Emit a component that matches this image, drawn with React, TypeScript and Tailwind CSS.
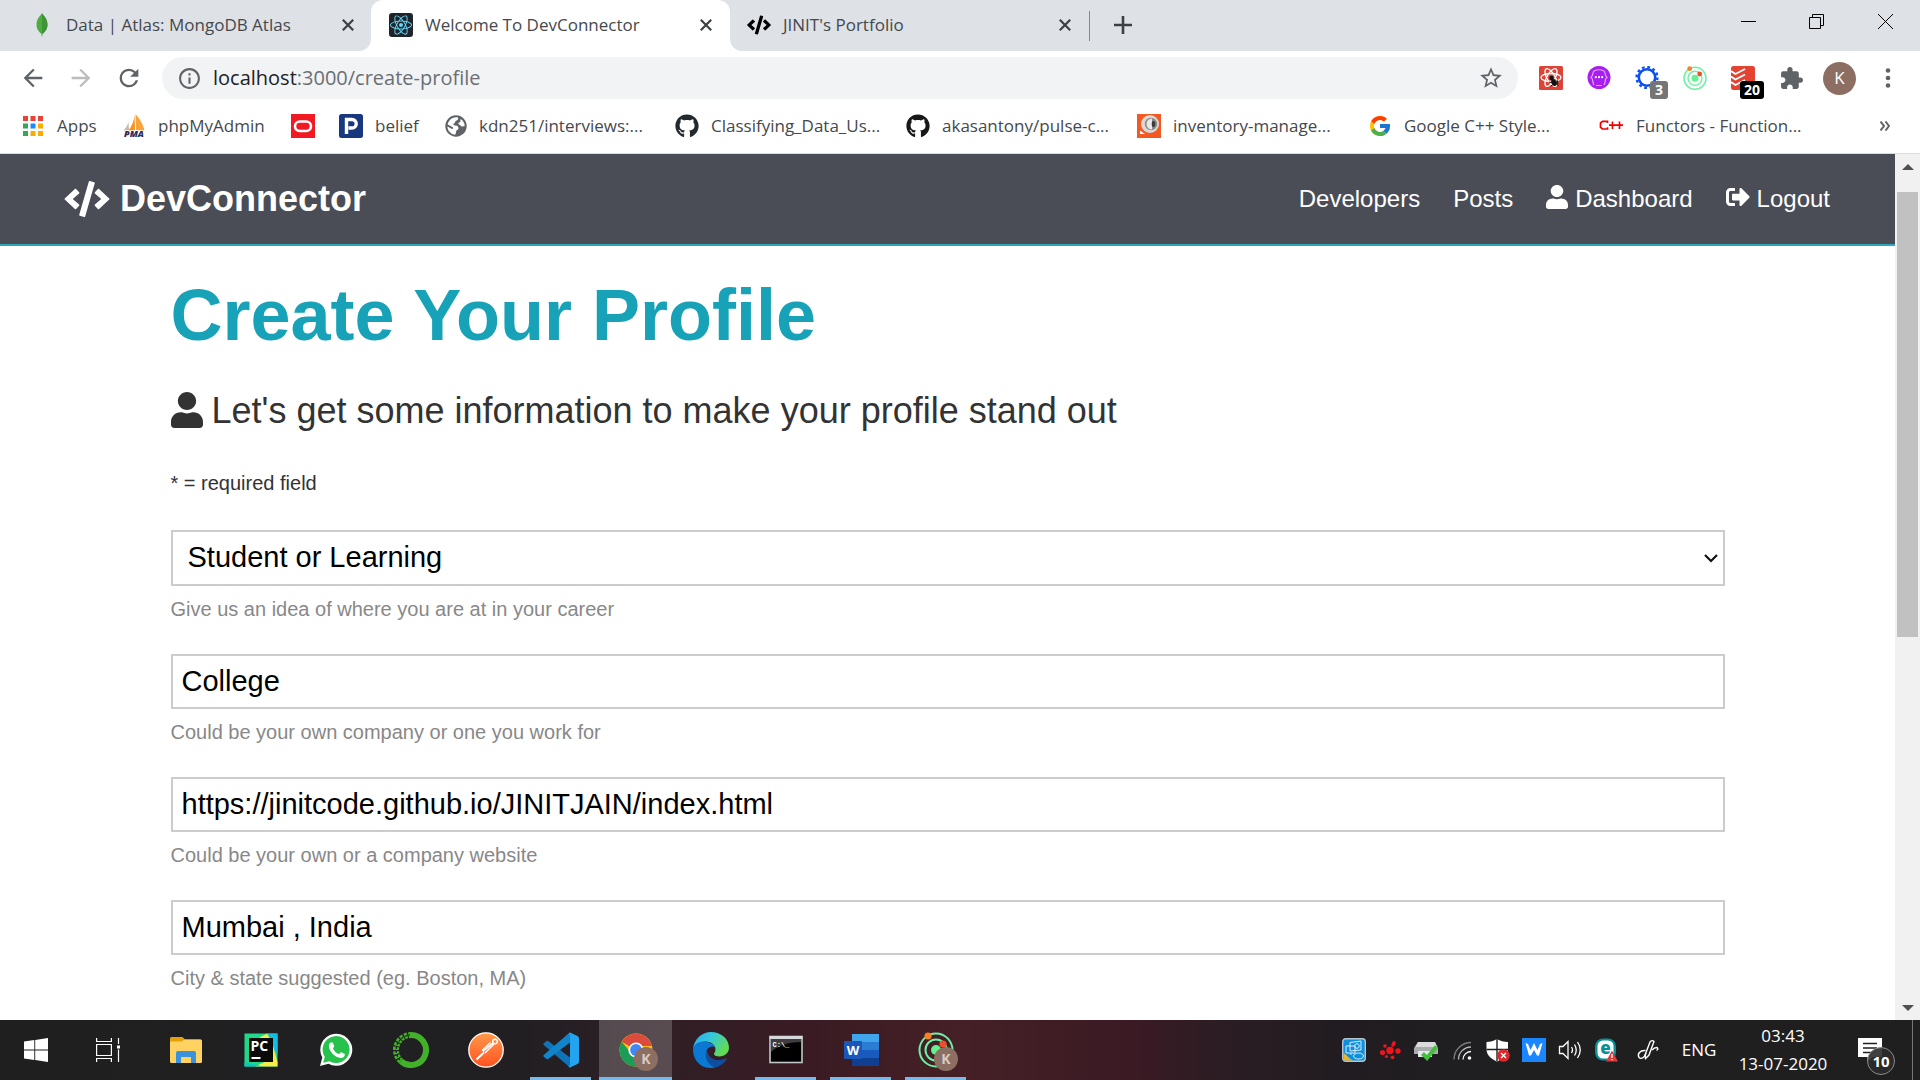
import React, { useState } from "react";
import { FaCode, FaGithub, FaReact, FaSignOutAlt, FaUser } from "react-icons/fa";
import { FcGoogle } from "react-icons/fc";
import { MdArrowBack, MdArrowForward, MdExtension, MdInfoOutline, MdRefresh, MdStarBorder } from "react-icons/md";

/* ---------- Browser icons ---------- */

function CloseIcon() {
  return (
    <svg viewBox="0 0 12 12" className="size-3" stroke="#3c4043" strokeWidth="2.2">
      <path d="M0.8 0.8 11.2 11.2M11.2 0.8 0.8 11.2" />
    </svg>
  );
}

function LeafIcon() {
  return (
    <svg viewBox="0 0 24 24" className="size-6">
      <path d="M12 0C12.500 2 17.500 5 17.500 11.500 17.500 16.500 14.500 19.500 12.600 20.800L12.300 23.500H11.700L11.400 20.800C9.500 19.500 6.500 16.500 6.500 11.500 6.500 5 11.500 2 12 0Z" fill="#4faa41" />
      <path d="M12 0C12.500 2 17.500 5 17.500 11.500 17.500 16.500 14.500 19.500 12.600 20.800L12 20.800Z" fill="#3f9438" />
    </svg>
  );
}

function AppsIcon() {
  const cells = ["#ea4335", "#ea4335", "#ea4335", "#34a853", "#1a8cff", "#f9ab00", "#34a853", "#f9ab00", "#f9ab00"];
  return (
    <svg viewBox="0 0 22 20" className="h-5 w-[22px]">
      {cells.map((c, i) => (
        <rect key={i} x={(i % 3) * 7.5} y={Math.floor(i / 3) * 7.5} width="5" height="5" fill={c} />
      ))}
    </svg>
  );
}

function PmaIcon() {
  return (
    <svg viewBox="0 0 24 24" className="size-6 overflow-visible">
      <path d="M6 3C7 8 6 12 1.500 16.500L7 16Z" fill="#c9b9a5" />
      <path d="M12.500 1C12 7 10 12 6.500 16.500L13 16Z" fill="#f6921e" />
      <path d="M13.500 0C18 5 21 10 22.500 16.500L14 16Z" fill="#f9a43a" />
      <text x="12" y="23" textAnchor="middle" fontFamily="Open Sans, sans-serif" fontWeight="800" fontStyle="italic" fontSize="9" fill="#2c2a5c">PMA</text>
    </svg>
  );
}

function OracleIcon() {
  return (
    <svg viewBox="0 0 24 24" className="size-6">
      <rect width="24" height="24" fill="#f11a22" />
      <rect x="4" y="7.500" width="16" height="9.500" rx="4.750" fill="none" stroke="#fff" strokeWidth="2.600" />
    </svg>
  );
}

function ParkIcon() {
  return (
    <svg viewBox="0 0 24 24" className="size-6">
      <rect width="24" height="24" rx="2.500" fill="#17387f" />
      <path d="M7.500 20V5.500H13A4.200 4.200 0 0 1 13 14H9.500" fill="none" stroke="#fff" strokeWidth="3.400" />
    </svg>
  );
}

function GlobeIcon() {
  return (
    <svg viewBox="0 0 22 22" className="size-[22px]">
      <circle cx="11" cy="11" r="10.700" fill="#5f6368" />
      <path d="M12.500 2.300C14 3.500 13 5.500 11 5.800 9.500 6.500 10.500 8 9 8.500 7.500 9 8.500 10.500 10.500 10.500 13 10.500 13.500 12 13.500 13.500 13 15 11 15 11 17 11 18.500 10.500 19.500 9.500 19.700 5.500 19 2.500 15.500 2.400 11.500L7 14C8.500 14 8.500 13 7.500 12L2.600 9.500C3.500 5.500 7 2.300 11 2.300ZM15.500 4C18.200 5.500 19.700 8 19.700 11L17 11.500C15.500 11.500 15.500 9.800 14 9.500 12.500 8.500 13.500 7.500 15 7.300 16 6.500 15 5 15.500 4Z" fill="#fff" />
    </svg>
  );
}

function HeadIcon() {
  return (
    <svg viewBox="0 0 24 24" className="size-6">
      <rect width="24" height="24" fill="#f15a22" />
      <circle cx="13" cy="10" r="9" fill="#dcd9d6" />
      <circle cx="14" cy="10" r="6.200" fill="#8c8c8c" />
      <path d="M15 4.500a5.500 5.500 0 0 0 0 11Z" fill="#e9e9e9" />
      <ellipse cx="16.500" cy="10" rx="1.800" ry="3" fill="#3b3b3b" />
      <path d="M3 16.500 8 20H3Z" fill="#fff" />
    </svg>
  );
}

function CppIcon() {
  return (
    <svg viewBox="0 0 25 24" className="h-6 w-[25px]" fill="none" stroke="#f10000" strokeWidth="1.700">
      <path d="M8.500 9V7.300H3.500L1.500 9V13.300L3.500 15H8.500V13.300M10 11.200H24M13.500 7.500V15M20.500 7.500V15" />
    </svg>
  );
}

function OrbitIcon({ className }: { className: string }) {
  return (
    <svg viewBox="0 0 36 36" className={className}>
      <g fill="none" stroke="#6ff0a6" strokeWidth="2.200">
        <circle cx="18" cy="18.500" r="16.500" />
        <circle cx="18" cy="18.500" r="10.500" />
      </g>
      <circle cx="18" cy="18.500" r="5.200" fill="#63f28f" />
      <circle cx="10" cy="4" r="3.600" fill="#f5812a" />
      <circle cx="25" cy="12" r="3.600" fill="#f04e29" />
    </svg>
  );
}

function BugReactIcon() {
  return (
    <svg viewBox="0 0 24 24" className="size-6">
      <rect width="24" height="24" rx="1.500" fill="#db4437" />
      <g fill="none" stroke="#fff" strokeWidth="1.300">
        <ellipse cx="12" cy="11.500" rx="10" ry="4" />
        <ellipse cx="12" cy="11.500" rx="10" ry="4" transform="rotate(60 12 11.500)" />
        <ellipse cx="12" cy="11.500" rx="10" ry="4" transform="rotate(120 12 11.500)" />
      </g>
      <ellipse cx="15" cy="16.500" rx="2.600" ry="3.500" transform="rotate(-25 15 16.500)" fill="#111" />
      <circle cx="12.500" cy="12" r="2.200" fill="#111" />
      <path d="M10 16l8 2M12 20l7-5M18 14l1 6" stroke="#111" strokeWidth="1" />
    </svg>
  );
}

function PurpleIcon() {
  return (
    <svg viewBox="0 0 24 24" className="size-6">
      <circle cx="12" cy="11.500" r="11.500" fill="#a81df0" />
      <g fill="none" stroke="#dba6f8" strokeWidth="1.200">
        <path d="M7 5C5 6.500 7 9 4 11.200 7 13.500 5 17 7 19M17 5C19 6.500 17 9 20 11.200 17 13.500 19 17 17 19" />
        <path d="M7 5C10 3.500 14 3.500 17 5M9 19.500h6" />
      </g>
      <g fill="#fff">
        <circle cx="8.800" cy="11.200" r="1.100" />
        <circle cx="12" cy="11.200" r="1.100" />
        <circle cx="15.200" cy="11.200" r="1.100" />
      </g>
    </svg>
  );
}

function GearIcon() {
  return (
    <svg viewBox="0 0 24 24" className="size-6" fill="none" stroke="#0a4ff5">
      <circle cx="12" cy="11.500" r="8.200" strokeWidth="2.600" />
      <circle cx="12" cy="11.500" r="10.400" strokeWidth="2.400" strokeDasharray="2.723 2.723" />
    </svg>
  );
}

function TodoistIcon() {
  return (
    <svg viewBox="0 0 24 24" className="size-6">
      <rect width="24" height="24" rx="2.500" fill="#e44332" />
      <path d="M0 5l4.500 3L14 3M0 10.500l4.500 3L14 8.500M0 16l4.500 3L14 14" fill="none" stroke="#fff" strokeWidth="1.900" />
    </svg>
  );
}

/* ---------- Browser chrome ---------- */

function InactiveTab({ icon, title, className }: { icon: React.ReactNode; title: string; className: string }) {
  return (
    <div className={`flex h-[51px] items-center pb-0.5 ${className}`}>
      {icon}
      <button className="ml-3 flex-1 text-left">{title}</button>
      <button aria-label={`Close ${title}`}>
        <CloseIcon />
      </button>
    </div>
  );
}

function TabStrip() {
  return (
    <div className="flex h-[51px] bg-[#dee1e6] text-[17px] text-[#45494d]">
      <InactiveTab icon={<LeafIcon />} title="Data | Atlas: MongoDB Atlas" className="w-[371px] pr-[17px] pl-[30px]" />
      <div className="relative flex w-[359px] items-center rounded-t-xl bg-white px-[18px] pb-0.5">
        <svg viewBox="0 0 12 12" className="absolute bottom-0 -left-3 size-3" fill="#fff">
          <path d="M12 0V12H0A12 12 0 0 0 12 0Z" />
        </svg>
        <svg viewBox="0 0 12 12" className="absolute -right-3 bottom-0 size-3" fill="#fff">
          <path d="M0 0V12H12A12 12 0 0 1 0 0Z" />
        </svg>
        <span className="flex size-6 items-center justify-center rounded-[3px] bg-[#20232a]">
          <FaReact className="size-[22px] text-[#61dafb]" />
        </span>
        <button className="ml-3 flex-1 text-left">Welcome To DevConnector</button>
        <button aria-label="Close Welcome To DevConnector">
          <CloseIcon />
        </button>
      </div>
      <InactiveTab icon={<FaCode className="size-6 text-black" />} title="JINIT's Portfolio" className="w-[359px] pr-[18px] pl-[17px]" />
      <div className="mt-[11px] h-[30px] w-px bg-[#85898e]" />
      <button aria-label="New tab" className="ml-6 flex items-center pb-0.5">
        <svg viewBox="0 0 18 18" className="size-[18px]" stroke="#3c4043" strokeWidth="2.600">
          <path d="M9 0V18M0 9H18" />
        </svg>
      </button>
      <div className="ml-auto flex h-[42px] items-center">
        <button aria-label="Minimize" className="flex w-[68px] justify-center">
          <svg viewBox="0 0 15 15" className="size-[15px]" stroke="#000">
            <path d="M0 7.500H15" />
          </svg>
        </button>
        <button aria-label="Restore" className="flex w-[69px] justify-center">
          <svg viewBox="0 0 15 15" className="size-[15px]" fill="none" stroke="#000">
            <path d="M0.500 3.500H11.500V14.500H0.500ZM3.500 3.500V0.500H14.500V11.500H11.500" />
          </svg>
        </button>
        <button aria-label="Close window" className="flex w-[69px] justify-center">
          <svg viewBox="0 0 15 15" className="size-[15px]" stroke="#000">
            <path d="M0 0 15 15M15 0 0 15" />
          </svg>
        </button>
      </div>
    </div>
  );
}

function Extension({ label, children, badge, badgeClass = "" }: { label: string; children: React.ReactNode; badge?: string; badgeClass?: string }) {
  return (
    <button aria-label={label} className="relative flex w-12 justify-center">
      {children}
      {badge && (
        <span className={`absolute top-[15px] flex h-[18px] items-center justify-center rounded-[3px] text-sm font-bold text-white ${badgeClass}`}>
          {badge}
        </span>
      )}
    </button>
  );
}

function Toolbar() {
  return (
    <div className="flex h-[54px] items-center bg-white text-[#5f6368]">
      <div className="flex w-[162px] items-center pl-[19px]">
        <button aria-label="Back"><MdArrowBack className="size-7" /></button>
        <button aria-label="Forward" className="ml-5 text-[#babcbe]"><MdArrowForward className="size-7" /></button>
        <button aria-label="Reload" className="ml-5"><MdRefresh className="size-7" /></button>
      </div>
      <div className="flex h-[42px] flex-1 items-center rounded-full bg-[#f1f3f4] pr-[14px] pl-[15px]">
        <MdInfoOutline className="size-[25px]" />
        <span className="ml-[11px] flex-1 text-[20px] text-[#6b6f74]">
          <span className="text-[#202124]">localhost</span>:3000/create-profile
        </span>
        <button aria-label="Bookmark this page"><MdStarBorder className="size-[26px]" /></button>
      </div>
      <div className="flex items-center pl-[9px]">
        <Extension label="React developer tools"><BugReactIcon /></Extension>
        <Extension label="Braces"><PurpleIcon /></Extension>
        <Extension label="Settings tool" badge="3" badgeClass="left-[27px] w-[18px] bg-[#757575]"><GearIcon /></Extension>
        <Extension label="Orbit"><OrbitIcon className="size-6" /></Extension>
        <Extension label="Todoist" badge="20" badgeClass="left-[21px] w-6 bg-black"><TodoistIcon /></Extension>
        <Extension label="Extensions"><MdExtension className="size-[25px]" /></Extension>
        <button className="ml-2 flex size-[33px] items-center justify-center rounded-full bg-[#8d6e63] text-[17px] text-white">K</button>
        <button aria-label="Menu" className="flex w-16 justify-center">
          <svg viewBox="0 0 6 20" className="h-5 w-1.5" fill="#5f6368">
            <circle cx="3" cy="2.500" r="2.300" />
            <circle cx="3" cy="10" r="2.300" />
            <circle cx="3" cy="17.500" r="2.300" />
          </svg>
        </button>
      </div>
    </div>
  );
}

function Bookmark({ icon, text, width, label }: { icon: React.ReactNode; text?: string; width: string; label?: string }) {
  return (
    <a href="#" aria-label={label} className={`flex shrink-0 items-center gap-3 whitespace-nowrap ${width}`}>
      {icon}
      {text}
    </a>
  );
}

function BookmarksBar() {
  return (
    <nav aria-label="Bookmarks" className="flex h-[49px] items-center border-b border-[#dadce0] bg-white pb-1.5 pl-[22px] text-[17px] text-[#45494d]">
      <Bookmark icon={<AppsIcon />} text="Apps" width="w-[100px] pl-px" />
      <Bookmark icon={<PmaIcon />} text="phpMyAdmin" width="w-[169px]" />
      <Bookmark icon={<OracleIcon />} width="w-12" label="Oracle" />
      <Bookmark icon={<ParkIcon />} text="belief" width="w-[105px]" />
      <Bookmark icon={<GlobeIcon />} text="kdn251/interviews:..." width="w-[231px] pl-px" />
      <Bookmark icon={<FaGithub className="size-6 text-[#24292e]" />} text="Classifying_Data_Us..." width="w-[231px]" />
      <Bookmark icon={<FaGithub className="size-6 text-[#191717]" />} text="akasantony/pulse-c..." width="w-[231px]" />
      <Bookmark icon={<HeadIcon />} text="inventory-manage..." width="w-[231px]" />
      <Bookmark icon={<FcGoogle className="size-6" />} text="Google C++ Style..." width="w-[231px]" />
      <Bookmark icon={<CppIcon />} text="Functors - Function..." width="w-[231px]" />
      <button aria-label="More bookmarks" className="mr-[30px] ml-auto">
        <svg viewBox="0 0 10 10" className="size-2.5" fill="none" stroke="#5f6368" strokeWidth="2">
          <path d="M0.500 0.500 4 5 0.500 9.500M5.500 0.500 9 5 5.500 9.500" />
        </svg>
      </button>
    </nav>
  );
}

/* ---------- Page ---------- */

function Navbar() {
  return (
    <nav className="flex h-[92px] shrink-0 items-center justify-between border-b-2 border-[#2ea5bd] bg-[#4a4d56] pr-[65px] pl-16 text-white">
      <h1 className="text-4xl font-bold">
        <a href="#" className="flex items-center gap-2.5">
          <FaCode className="h-9 w-[46px]" />
          DevConnector
        </a>
      </h1>
      <ul className="flex items-center gap-[33px] text-2xl">
        <li><a href="#">Developers</a></li>
        <li><a href="#">Posts</a></li>
        <li>
          <a href="#" className="flex items-center gap-[7px]">
            <FaUser className="mb-1 h-6 w-[22px]" preserveAspectRatio="none" />
            Dashboard
          </a>
        </li>
        <li>
          <a href="#" className="flex items-center gap-[7px]">
            <FaSignOutAlt className="mb-1 size-6" />
            Logout
          </a>
        </li>
      </ul>
    </nav>
  );
}

const hintClass = "mt-1 block text-xl leading-[38px] text-[#888888]";

function TextField({ id, value, hint }: { id: string; value: string; hint: string }) {
  const [text, setText] = useState(value);
  return (
    <div className="mb-[26px]">
      <input
        id={id}
        type="text"
        value={text}
        onChange={(e) => setText(e.target.value)}
        className="block h-[55px] w-full border-2 border-[#cccccc] bg-white px-[9px] text-[29px] text-black outline-none"
      />
      <label htmlFor={id} className={hintClass}>{hint}</label>
    </div>
  );
}

function ProfileForm() {
  return (
    <section className="mx-auto w-full max-w-[1650px] px-12 pt-[26px] text-[#333333]">
      <h1 className="text-7xl leading-[86px] font-bold text-[#17a2b8]">Create Your Profile</h1>
      <p className="mt-6 flex items-center gap-[9px] text-4xl leading-[58px]">
        <FaUser className="mb-0.5 h-9 w-8" preserveAspectRatio="none" />
        Let's get some information to make your profile stand out
      </p>
      <p className="mt-6 mb-7 text-xl leading-[38px]">* = required field</p>
      <form>
        <div className="mb-[26px]">
          <div className="relative">
            <select id="status" defaultValue="student" className="block h-14 w-full appearance-none border-2 border-[#cccccc] bg-white px-[15px] text-[29px] text-black outline-none">
              <option value="student">Student or Learning</option>
              <option value="developer">Developer</option>
            </select>
            <svg viewBox="0 0 14 9" className="pointer-events-none absolute top-6 right-[7px] h-[9px] w-[14px]" fill="none" stroke="#111" strokeWidth="2.200">
              <path d="M1 1 7 7 13 1" />
            </svg>
          </div>
          <label htmlFor="status" className={hintClass}>Give us an idea of where you are at in your career</label>
        </div>
        <TextField id="company" value="College" hint="Could be your own company or one you work for" />
        <TextField id="website" value="https://jinitcode.github.io/JINITJAIN/index.html" hint="Could be your own or a company website" />
        <TextField id="location" value="Mumbai , India" hint="City & state suggested (eg. Boston, MA)" />
      </form>
    </section>
  );
}

function Scrollbar() {
  return (
    <div className="flex w-[25px] shrink-0 flex-col items-center bg-[#f1f1f1]">
      <button aria-label="Scroll up" className="flex h-[38px] items-start pt-2.5">
        <svg viewBox="0 0 12 6" className="h-1.5 w-3" fill="#505050"><path d="M6 0 12 6H0Z" /></svg>
      </button>
      <div className="h-[445px] w-[21px] bg-[#c1c1c1]" />
      <button aria-label="Scroll down" className="mt-auto flex pb-[9px]">
        <svg viewBox="0 0 12 6" className="h-1.5 w-3" fill="#505050"><path d="M0 0H12L6 6Z" /></svg>
      </button>
    </div>
  );
}

/* ---------- Taskbar ---------- */

function KBadge() {
  return (
    <>
      <circle cx="27" cy="26" r="12" fill="#8d6e63" />
      <text x="27" y="31" textAnchor="middle" fontFamily="Open Sans, sans-serif" fontWeight="700" fontSize="14" fill="#d8cbc6">K</text>
    </>
  );
}

function FolderIcon() {
  return (
    <svg viewBox="0 0 36 36" className="size-9">
      <path d="M2 6.500A1.500 1.500 0 0 1 3.500 5H14.500L17 7.500H32.500A1.500 1.500 0 0 1 34 9V14H2Z" fill="#e3a008" />
      <path d="M2 9.500H13.500L16.500 7.500H32.500A1.500 1.500 0 0 1 34 9V29.500A1.500 1.500 0 0 1 32.500 31H3.500A1.500 1.500 0 0 1 2 29.500Z" fill="#ffd262" />
      <path d="M8 31V21A2 2 0 0 1 10 19H26A2 2 0 0 1 28 21V31H23V25H13V31Z" fill="#3a92dc" />
    </svg>
  );
}

function PyCharmIcon() {
  return (
    <svg viewBox="0 0 36 36" className="size-9">
      <rect x="1.500" y="1.500" width="33" height="33" fill="#21d789" />
      <path d="M24 1.500H34.500V22L28 14Z" fill="#12bde0" />
      <path d="M16 6 24 1.500 29 10 34.500 30V34.500H12L30 26Z" fill="#f5ee48" />
      <path d="M1.500 34.500V30L20 34.500Z" fill="#12c6c0" />
      <rect x="6" y="6" width="24" height="24" fill="#0a0a0a" />
      <text x="7.500" y="19" fontFamily="Open Sans, sans-serif" fontWeight="700" fontSize="14" fill="#fff">PC</text>
      <rect x="8.500" y="25" width="9" height="2" fill="#fff" />
    </svg>
  );
}

function WhatsAppIcon() {
  return (
    <svg viewBox="0 0 36 36" className="size-9">
      <path d="M2 34 4.300 25.500A16 16 0 1 1 10.500 31.700Z" fill="#fff" />
      <path d="M5.200 30.800 6.800 25A13.500 13.500 0 1 1 11.200 29.200Z" fill="#27c24c" />
      <path d="M11 12.500C12 9.800 14.500 9.800 15 11L16.200 14C16.400 15 14.800 16 15 16.500 16 19 18.500 21.200 20.800 22 21.500 22 22.500 20 23.200 20.200L26.500 21.800C27.300 22.300 26.500 24.500 25.500 25.200 20 28.500 9.500 19.500 11 12.500Z" fill="#fff" />
    </svg>
  );
}

function AnacondaIcon() {
  return (
    <svg viewBox="0 0 36 36" className="size-9" fill="none" stroke="#43b02a">
      <path d="M18 3A15 15 0 1 1 8 29.200" strokeWidth="6" />
      <path d="M8 29.200A15 15 0 0 1 18 3" strokeWidth="6" strokeDasharray="3 1.200" />
      <path d="M7 28A15 15 0 0 1 17 3" strokeWidth="1.200" stroke="#1f1f21" strokeDasharray="2 2" />
    </svg>
  );
}

function PostmanIcon() {
  return (
    <svg viewBox="0 0 36 36" className="size-9">
      <defs>
        <linearGradient id="postman" x1="0" y1="0" x2="0" y2="1">
          <stop offset="0" stopColor="#ff9a4a" />
          <stop offset="1" stopColor="#ff5120" />
        </linearGradient>
      </defs>
      <circle cx="18" cy="18" r="17.200" fill="url(#postman)" stroke="#fff" strokeWidth="1.300" />
      <g fill="none" stroke="#fff">
        <circle cx="27" cy="9.500" r="2.300" strokeWidth="1.500" />
        <path d="M25 11 15 19.500M26 12 17 21M22.500 10.500 14 18.500" strokeWidth="1.500" />
        <path d="M16 20.500 8.500 27.500" strokeWidth="2" />
      </g>
    </svg>
  );
}

function VsCodeIcon() {
  return (
    <svg viewBox="0 0 36 36" className="size-9">
      <path d="M0.500 11.500 3.500 9Q4.500 8.500 5.500 9.200L27 25.500V35.200Q26 34.800 25.500 34.200L0.700 13Q0 12.200 0.500 11.500Z" fill="#0f73b8" />
      <path d="M0.500 24.500 3.500 27Q4.500 27.500 5.500 26.800L27 10.500V0.500Q26 0.800 25.500 1.500L0.700 23Q0 23.800 0.500 24.500Z" fill="#1184ca" />
      <path d="M27 0.500 34.500 4Q36 4.800 36 6.500V29.500Q36 31.200 34.500 32L27 35.500Q25.800 35.500 25.500 34.200Q27 34.500 27 32.500V3.500Q27 1.500 25.500 1.500Z" fill="#22a4f1" />
    </svg>
  );
}

function ChromeIcon() {
  return (
    <svg viewBox="-5 -5 44 44" className="size-11">
      <circle cx="17" cy="17" r="16.500" fill="#fbc11a" />
      <path d="M17 17 2.700 8.800A16.500 16.500 0 0 1 33 13H17Z" fill="#dd4b3e" />
      <path d="M2.700 8.800A16.500 16.500 0 0 0 17 33.500L23 21 12 20Z" fill="#1b9d58" />
      <circle cx="17" cy="17" r="7.600" fill="#fff" />
      <circle cx="17" cy="17" r="5.900" fill="#4386f5" />
      <KBadge />
    </svg>
  );
}

function EdgeIcon() {
  return (
    <svg viewBox="0 0 36 36" className="size-9">
      <defs>
        <linearGradient id="edgeTop" x1="0" y1="0" x2="1" y2="0.500">
          <stop offset="0" stopColor="#2aa6f0" />
          <stop offset="0.500" stopColor="#35c8d8" />
          <stop offset="1" stopColor="#62dc52" />
        </linearGradient>
      </defs>
      <path d="M0 17C1 7 9 0 18 0 28 0 36 7 36 15.500 36 21 31.500 24.500 26.500 24.500 23 24.500 21 23.500 21 22 21 21 22.500 20 22.500 17.500 22.500 13 18 9.500 12.500 9.500 6 9.500 1.500 13 0 17Z" fill="url(#edgeTop)" />
      <path d="M0 18C0 12.500 6 9 12 9.500 17 9.800 21 12.500 22.200 15.500 19 13.500 15.500 15 14 18 11 25 16 33 22.500 35.500 8 38.500 0 28 0 18Z" fill="#0b78d4" />
      <path d="M14 18C10.500 25 15 33.500 22.500 35.500 28 34 31.500 31 33.500 27.500 34 26.500 33 26.300 32 26.800 24 30 15 27 14 18Z" fill="#0d4f9e" />
    </svg>
  );
}

function CmdIcon() {
  return (
    <svg viewBox="0 0 36 36" className="size-9">
      <rect x="2" y="4.500" width="32" height="26" fill="#000" stroke="#c4c7c9" strokeWidth="1.600" />
      <path d="M3 7H33V10C20 10 9 14 3 20Z" fill="#3d3d3d" />
      <rect x="1.500" y="4" width="33" height="3" fill="#d5d8da" />
      <text x="4.500" y="14.500" fontFamily="Liberation Mono, monospace" fontWeight="700" fontSize="7" fill="#fff">C:\_</text>
    </svg>
  );
}

function WordIcon() {
  return (
    <svg viewBox="0 0 36 36" className="size-9">
      <rect x="9" y="2" width="27" height="8.500" fill="#41a5ee" />
      <rect x="9" y="10" width="27" height="8.500" fill="#2b7cd3" />
      <rect x="9" y="18" width="27" height="8.500" fill="#185abd" />
      <rect x="9" y="26" width="27" height="8" fill="#103f91" />
      <rect x="1" y="9" width="18" height="18" rx="1" fill="#1a57b8" />
      <text x="10" y="23" textAnchor="middle" fontFamily="Open Sans, sans-serif" fontWeight="700" fontSize="13" fill="#fff">W</text>
    </svg>
  );
}

function OrbitKIcon() {
  return (
    <svg viewBox="-5 -5 44 44" className="size-11">
      <g fill="none" stroke="#6ff0a6" strokeWidth="2">
        <circle cx="17" cy="17" r="16.500" />
        <circle cx="17" cy="17" r="10.500" />
      </g>
      <circle cx="17" cy="17" r="5" fill="#63f28f" />
      <circle cx="9" cy="3" r="3.600" fill="#f5812a" />
      <circle cx="24" cy="11" r="3.600" fill="#f04e29" />
      <KBadge />
    </svg>
  );
}

function TaskButton({ label, icon, state = "idle" }: { label: string; icon: React.ReactNode; state?: "idle" | "open" | "active" }) {
  return (
    <button aria-label={label} className="relative flex h-full w-[75px] items-center justify-center">
      {state === "active" && <span className="absolute inset-x-px inset-y-0 bg-white/20" />}
      <span className="relative">{icon}</span>
      {state === "open" && <span className="absolute inset-x-[7px] bottom-0 h-[3px] bg-[#76b9ed]" />}
      {state === "active" && <span className="absolute inset-x-px bottom-0 h-[3px] bg-[#76b9ed]" />}
    </button>
  );
}

function TrayIcons() {
  return (
    <div className="flex items-center">
      <button aria-label="Intel graphics" className="flex w-9 justify-center">
        <svg viewBox="0 0 24 24" className="size-6">
          <rect x="0.700" y="0.700" width="22.600" height="22.600" rx="3" fill="#0e8fdd" stroke="#b5c4cd" strokeWidth="1.400" />
          <path d="M1.500 15C5 17 6 20 11 22.500H3.500Q1.500 22.500 1.500 20.500Z" fill="#f0b323" />
          <g fill="none" stroke="#d4efff" strokeWidth="1">
            <path d="M8 4.500 19 3V12L8 13ZM4 8H13V15H4ZM9 15V17" />
            <circle cx="15" cy="8" r="2.300" />
            <ellipse cx="16.500" cy="18" rx="5" ry="3" />
          </g>
        </svg>
      </button>
      <button aria-label="Audio" className="flex w-9 justify-center">
        <svg viewBox="0 0 24 24" className="size-6" fill="#f0151d">
          <circle cx="12" cy="12.500" r="3.700" />
          <circle cx="4.500" cy="14.500" r="2.600" />
          <circle cx="20" cy="13" r="2.700" />
          <circle cx="7" cy="8" r="1.800" />
          <ellipse cx="15.500" cy="6" rx="1.800" ry="3" transform="rotate(25 15.500 6)" />
          <circle cx="8.500" cy="18.500" r="1.600" />
          <circle cx="14.500" cy="19.300" r="1.900" />
        </svg>
      </button>
      <button aria-label="Safely remove hardware" className="flex w-9 justify-center">
        <svg viewBox="0 0 24 24" className="size-6">
          <path d="M4 4H21L24 10V16H0V10Z" fill="#a9abae" />
          <path d="M4 4H21L23 9H1.500Z" fill="#d9dbdd" />
          <rect x="4" y="13" width="14" height="6" fill="#e8e8ea" />
          <path d="M8.500 15.500 13 20 22.500 8.500" fill="none" stroke="#3fc13a" strokeWidth="4" />
        </svg>
      </button>
      <button aria-label="Network" className="flex w-9 justify-center">
        <svg viewBox="0 0 24 24" className="size-6" fill="none" strokeWidth="1.300">
          <path d="M4 21.500A17 17 0 0 1 21 4.500" stroke="#7d7d7d" />
          <path d="M8.500 21.500A12.500 12.500 0 0 1 21 9" stroke="#b8b8b8" />
          <path d="M13 21.500A8 8 0 0 1 21 13.500" stroke="#fff" />
          <circle cx="19.500" cy="20" r="1.800" fill="#fff" />
        </svg>
      </button>
      <button aria-label="Security" className="flex w-9 justify-center">
        <svg viewBox="0 0 24 24" className="size-6">
          <path d="M11 1C8 3 4 4 0.500 4V11C0.500 17 5 21 11 23.500 17 21 22 17 22 11V4C18 4 14 3 11 1Z" fill="#fff" />
          <path d="M11 1V23M0.500 11.500H22" stroke="#1f1f20" strokeWidth="1.400" />
          <circle cx="17.500" cy="17.500" r="6.300" fill="#d8292f" />
          <path d="M15 15 20 20M20 15 15 20" stroke="#fff" strokeWidth="1.300" />
        </svg>
      </button>
      <button aria-label="Wave monitor" className="flex w-9 justify-center">
        <svg viewBox="0 0 24 24" className="size-6">
          <rect width="24" height="24" fill="#1a86ff" />
          <path d="M3.500 5 6 6 8.500 12 12 5 15.500 12 18 6 20.500 5 17 17.500H15L12 12 9 17.500H7Z" fill="#fff" />
        </svg>
      </button>
      <button aria-label="Volume" className="flex w-9 justify-center">
        <svg viewBox="0 0 24 24" className="size-6" fill="none" stroke="#fff" strokeWidth="1.300">
          <path d="M1.500 8.500H5L10 3.500V20.500L5 15.500H1.500Z" />
          <path d="M13.500 9Q15.500 12 13.500 15M16.500 6.500Q20 12 16.500 17.500M19.500 4Q25 12 19.500 20" />
        </svg>
      </button>
      <button aria-label="Antivirus" className="flex w-9 justify-center">
        <svg viewBox="0 0 24 24" className="size-6 overflow-visible">
          <rect x="1" y="0.500" width="21" height="22" rx="8" fill="#0a8f98" />
          <rect x="3.500" y="2.500" width="16" height="18" rx="5.500" fill="#fff" />
          <text x="11.500" y="16" textAnchor="middle" fontFamily="Open Sans, sans-serif" fontWeight="800" fontSize="17" fill="#0a8f98">e</text>
          <path d="M18 12.500 24 23.500H12Z" fill="#e03a3a" />
          <path d="M18 16V20M18 21V22.300" stroke="#fff" strokeWidth="1.300" />
        </svg>
      </button>
      <button aria-label="Pen workspace" className="ml-1.5 flex w-9 justify-center">
        <svg viewBox="0 0 24 24" className="size-6" fill="none" stroke="#fff" strokeWidth="1.400">
          <path d="M9 17 14 4Q16 1.500 18 3.500L13 17 9.500 20.500Z" />
          <path d="M9.500 12.500C4 12 1 16 3 19.500 5.500 22 9.500 18.500 10 15M16 12Q18 9.500 21 9.500 23 11 20.500 12.500" />
        </svg>
      </button>
    </div>
  );
}

function Taskbar() {
  return (
    <footer className="flex h-[60px] shrink-0 items-center bg-[linear-gradient(90deg,#1f1f20_0%,#211f22_27%,#2f1f26_34%,#3a1b23_42%,#452026_50%,#3b1a24_59%,#2a1d23_64%,#211c21_70%,#1f1f20_78%)] text-white">
      <button aria-label="Start" className="flex w-[72px] justify-center">
        <svg viewBox="0 0 24 24" className="size-6" fill="#fff">
          <path d="M0 3.500 10.300 2V11.400H0ZM11.200 1.900 24 0V11.400H11.200ZM0 12.400H10.300V22L0 20.500ZM11.200 12.400H24V24L11.200 22.100Z" />
        </svg>
      </button>
      <button aria-label="Task view" className="mr-1 flex w-[72px] justify-center">
        <svg viewBox="0 0 24 24" className="size-6" fill="none" stroke="#fff" strokeWidth="1.200">
          <path d="M0.600 0V3.500H15.400V0M0.600 6.500H15.400V17.500H0.600ZM0.600 24V20.500H15.400V24M22.500 0V6M22.500 11.500V24" />
          <rect x="21" y="7.500" width="3" height="3" fill="#fff" stroke="none" />
        </svg>
      </button>
      <TaskButton label="File Explorer" icon={<FolderIcon />} />
      <TaskButton label="PyCharm" icon={<PyCharmIcon />} />
      <TaskButton label="WhatsApp" icon={<WhatsAppIcon />} />
      <TaskButton label="Anaconda" icon={<AnacondaIcon />} />
      <TaskButton label="Postman" icon={<PostmanIcon />} />
      <TaskButton label="Visual Studio Code" icon={<VsCodeIcon />} state="open" />
      <TaskButton label="Chrome" icon={<ChromeIcon />} state="active" />
      <TaskButton label="Edge" icon={<EdgeIcon />} />
      <TaskButton label="Command Prompt" icon={<CmdIcon />} state="open" />
      <TaskButton label="Word" icon={<WordIcon />} state="open" />
      <TaskButton label="Orbit" icon={<OrbitKIcon />} state="open" />
      <div className="ml-auto flex h-full items-center">
        <TrayIcons />
        <button className="w-[66px] text-center text-[17px]">ENG</button>
        <button className="w-[102px] text-center text-[17px] leading-7 whitespace-nowrap">
          <time className="block">03:43</time>
          <time className="block">13-07-2020</time>
        </button>
        <button aria-label="Notifications" className="relative ml-6 flex w-12 items-center">
          <svg viewBox="0 0 24 24" className="size-6">
            <path d="M0 0H24V19H15L9.500 24V19H0Z" fill="#fff" />
            <path d="M5 5.500H19M5 10H19M5 14.500H14" stroke="#1f1f20" strokeWidth="1.300" />
          </svg>
          <span className="absolute top-[9px] left-[9px] flex size-7 items-center justify-center rounded-full border border-[#8b8b8b] bg-[#2b2b2b]/90 text-[15px] font-bold">10</span>
        </button>
        <button aria-label="Show desktop" className="ml-[6px] h-full w-2 border-l border-[#777777]" />
      </div>
    </footer>
  );
}

export default function App() {
  return (
    <div className="flex h-screen flex-col overflow-hidden bg-white font-['Liberation_Sans',Arial,sans-serif]">
      <header className="shrink-0 font-['Open_Sans','Noto_Sans',sans-serif]">
        <TabStrip />
        <Toolbar />
        <BookmarksBar />
      </header>
      <div className="flex min-h-0 flex-1">
        <main className="flex min-w-0 flex-1 flex-col overflow-hidden">
          <Navbar />
          <ProfileForm />
        </main>
        <Scrollbar />
      </div>
      <div className="shrink-0 font-['Open_Sans','Noto_Sans',sans-serif]">
        <Taskbar />
      </div>
    </div>
  );
}
